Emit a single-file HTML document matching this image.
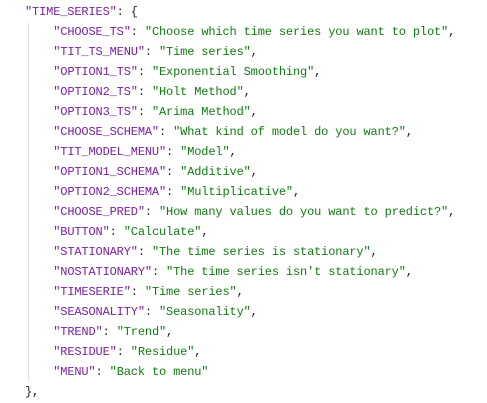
<!DOCTYPE html>
<html><head><style>
body{margin:0;background:#fff;width:487px;height:403px;overflow:hidden;}
.c{position:absolute;left:25px;top:2px;font-family:"Liberation Mono",monospace;font-size:12px;letter-spacing:-0.15px;color:#222;}
.c div{height:20px;line-height:20px;white-space:pre;}
.k{color:#7b1fa2}.s{color:#0f7d0f}
.g{position:absolute;left:28px;top:23px;width:1px;height:358px;background:#e0e0e0}
</style></head><body>
<div class="g"></div>
<div class="c"><div><span class="k">"TIME_SERIES"</span>: {</div><div>    <span class="k">"CHOOSE_TS"</span>: <span class="s">"Choose which time series you want to plot"</span>,</div><div>    <span class="k">"TIT_TS_MENU"</span>: <span class="s">"Time series"</span>,</div><div>    <span class="k">"OPTION1_TS"</span>: <span class="s">"Exponential Smoothing"</span>,</div><div>    <span class="k">"OPTION2_TS"</span>: <span class="s">"Holt Method"</span>,</div><div>    <span class="k">"OPTION3_TS"</span>: <span class="s">"Arima Method"</span>,</div><div>    <span class="k">"CHOOSE_SCHEMA"</span>: <span class="s">"What kind of model do you want?"</span>,</div><div>    <span class="k">"TIT_MODEL_MENU"</span>: <span class="s">"Model"</span>,</div><div>    <span class="k">"OPTION1_SCHEMA"</span>: <span class="s">"Additive"</span>,</div><div>    <span class="k">"OPTION2_SCHEMA"</span>: <span class="s">"Multiplicative"</span>,</div><div>    <span class="k">"CHOOSE_PRED"</span>: <span class="s">"How many values do you want to predict?"</span>,</div><div>    <span class="k">"BUTTON"</span>: <span class="s">"Calculate"</span>,</div><div>    <span class="k">"STATIONARY"</span>: <span class="s">"The time series is stationary"</span>,</div><div>    <span class="k">"NOSTATIONARY"</span>: <span class="s">"The time series isn't stationary"</span>,</div><div>    <span class="k">"TIMESERIE"</span>: <span class="s">"Time series"</span>,</div><div>    <span class="k">"SEASONALITY"</span>: <span class="s">"Seasonality"</span>,</div><div>    <span class="k">"TREND"</span>: <span class="s">"Trend"</span>,</div><div>    <span class="k">"RESIDUE"</span>: <span class="s">"Residue"</span>,</div><div>    <span class="k">"MENU"</span>: <span class="s">"Back to menu"</span></div><div>},</div></div>
</body></html>
